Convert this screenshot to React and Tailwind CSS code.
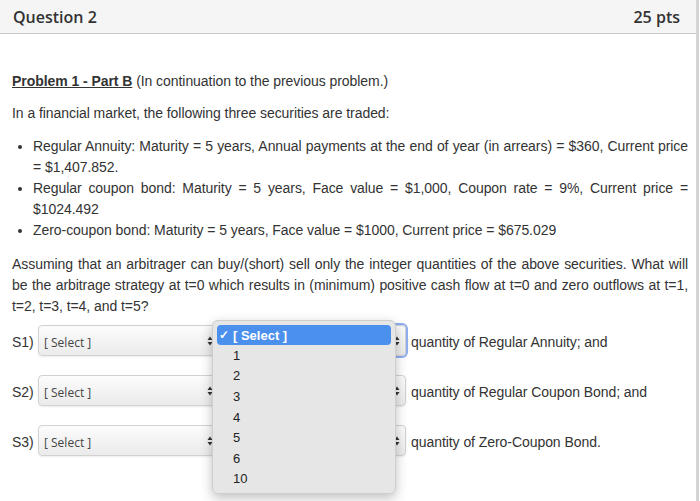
import React from "react";

const Arrows = ({ className }) => (
  <svg width="6" height="10" viewBox="0 0 6 10" className={className}>
    <path d="M3 0.5 L5.5 4 L0.5 4 Z" fill="#333" />
    <path d="M3 9.5 L5.5 6 L0.5 6 Z" fill="#333" />
  </svg>
);

const options = ["1", "2", "3", "4", "5", "6", "10"];

const Dropdown = () => (
  <div className="absolute left-[173px] top-[-6px] z-10 w-[184px] h-[174px] rounded-[6px] bg-[#e6e6e6] border border-[#cfcfcf] shadow-[0_4px_12px_rgba(0,0,0,0.25)] p-[4px] font-['Liberation_Sans',Arial,sans-serif] text-[13px] text-[#222] tracking-normal">
    <div className="flex items-center h-[20px] rounded-[4px] bg-[#4c90ee] text-white font-semibold pl-[2px]">
      <span className="w-[14px] text-[12px]">✓</span>
      <span>[ Select ]</span>
    </div>
    {options.map((o) => (
      <div key={o} className="flex items-center h-[20.6px] pl-[16px]">
        {o}
      </div>
    ))}
  </div>
);

const SelectRow = ({ label, text, open }) => (
  <div className="flex items-center h-[31px]">
    <span className="w-[22px] pt-[3px]">{label}</span>
    <div className="relative ml-[4px] w-[368px] h-[31px] rounded-[4px] border border-[#d2d2d2] bg-linear-to-b from-[#fcfcfc] to-[#ebebeb] shadow-[0_1px_2px_rgba(0,0,0,0.08)]">
      <span className="absolute left-[5px] top-[6px] font-['Open_Sans',sans-serif] text-[12px] text-[#444] tracking-normal">[ Select ]</span>
      <Arrows className="absolute left-[168px] top-[10px]" />
      <Arrows className="absolute right-[5px] top-[10px]" />
      {open && (
        <>
          <div className="absolute right-[-3px] top-[-3px] w-[17px] h-[35px] rounded-r-[6px] border-[2.5px] border-l-0 border-[#8eaef0]" />
          <Dropdown />
        </>
      )}
    </div>
    <span className="ml-[5px] pt-[3px]">{text}</span>
  </div>
);

export default function App() {
  return (
    <div className="w-[699px] h-[501px] bg-white border-r-[3px] border-[#d4d4d4] overflow-hidden">
      <div className="flex items-center justify-between h-[34px] bg-[#f5f5f5] border-b border-[#c6c6c6] pl-[13px] pr-[16px] font-['Open_Sans',sans-serif] text-[16px] font-semibold text-[#333]">
        <span>Question 2</span>
        <span>25 pts</span>
      </div>
      <div className="pt-[37px] pl-[12px] pr-[8px] font-['Liberation_Sans',Arial,sans-serif] text-[14px] leading-[21px] tracking-[-0.06px] text-[#333]">
        <p>
          <span className="font-bold underline">Problem 1 - Part B</span> (In continuation to the previous problem.)
        </p>
        <p className="mt-[11px]">In a financial market, the following three securities are traded:</p>
        <ul className="mt-[12px] list-disc pl-[21px] text-justify">
          <li>
            Regular Annuity: Maturity = 5 years, Annual payments at the end of year (in arrears) = $360, Current price = $1,407.852.
          </li>
          <li>Regular coupon bond: Maturity = 5 years, Face value = $1,000, Coupon rate = 9%, Current price = $1024.492</li>
          <li>Zero-coupon bond: Maturity = 5 years, Face value = $1000, Current price = $675.029</li>
        </ul>
        <p className="mt-[13px] text-justify">
          Assuming that an arbitrager can buy/(short) sell only the integer quantities of the above securities. What will be the arbitrage strategy at t=0 which results in (minimum) positive cash flow at t=0 and zero outflows at t=1, t=2, t=3, t=4, and t=5?
        </p>
        <div className="mt-[8px] flex flex-col gap-[19px]">
          <SelectRow label="S1)" text="quantity of Regular Annuity; and" open />
          <SelectRow label="S2)" text="quantity of Regular Coupon Bond; and" />
          <SelectRow label="S3)" text="quantity of Zero-Coupon Bond." />
        </div>
      </div>
    </div>
  );
}
